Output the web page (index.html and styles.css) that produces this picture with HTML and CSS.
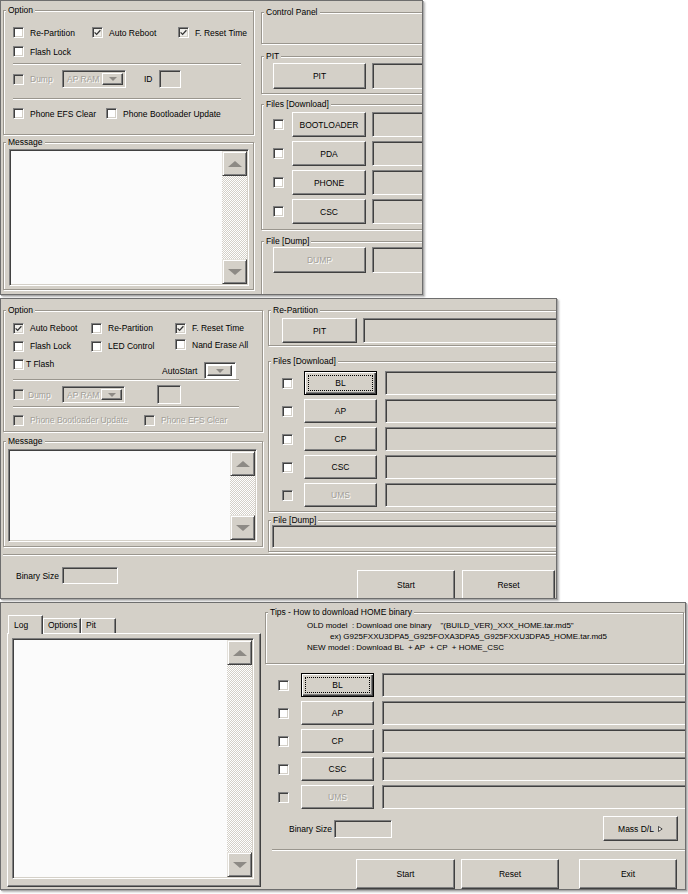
FILE: index.html
```html
<!DOCTYPE html>
<html lang="en">
<head>
<meta charset="utf-8">
<title>Odin</title>
<link rel="stylesheet" href="styles.css">
</head>
<body>
<div class="stack">

<!-- ===== Window 1 ===== -->
<section class="win w1">
  <div class="col lc1">
    <fieldset class="grp opt1">
      <legend>Option</legend>
      <div class="opt1-in">
        <div class="row h19">
          <label class="ck c79"><span class="cb"></span>Re-Partition</label>
          <label class="ck c86"><span class="cb on"><svg class="tick" viewBox="0 0 7 7"><path d="M0.6 3.4 L2.6 5.4 L6.4 1.2"/></svg></span>Auto Reboot</label>
          <label class="ck"><span class="cb on"><svg class="tick" viewBox="0 0 7 7"><path d="M0.6 3.4 L2.6 5.4 L6.4 1.2"/></svg></span>F. Reset Time</label>
        </div>
        <div class="row h19">
          <label class="ck"><span class="cb"></span>Flash Lock</label>
        </div>
        <div class="hr hr228 mt2"></div>
        <div class="row h18 mt5">
          <label class="ck dis c49"><span class="cb"></span>Dump</label>
          <div class="combo cmb1 dis"><span class="ctx">AP RAM</span><span class="dd"><i class="sdn"></i></span></div>
          <span class="idl">ID</span>
          <span class="tb idbox"></span>
        </div>
        <div class="hr hr228 mt10"></div>
        <div class="row h19 mt4">
          <label class="ck c93"><span class="cb"></span>Phone EFS Clear</label>
          <label class="ck"><span class="cb"></span>Phone Bootloader Update</label>
        </div>
      </div>
    </fieldset>
    <fieldset class="grp msg1">
      <legend>Message</legend>
      <div class="msg1-in">
        <div class="memo m1">
          <div class="sb"><span class="ar"><i class="aup"></i></span><span class="trk"></span><span class="ar"><i class="adn"></i></span></div>
        </div>
      </div>
    </fieldset>
  </div>

  <div class="col rc1">
    <fieldset class="grp cp1"><legend>Control Panel</legend></fieldset>
    <fieldset class="grp pit1"><legend>PIT</legend>
      <div class="row pit1-in"><span class="btn">PIT</span><span class="tb"></span></div>
    </fieldset>
    <fieldset class="grp files1"><legend>Files [Download]</legend>
      <div class="files1-in">
        <div class="row frow"><span class="cb"></span><span class="btn">BOOTLOADER</span><span class="tb"></span></div>
        <div class="row frow"><span class="cb"></span><span class="btn">PDA</span><span class="tb"></span></div>
        <div class="row frow"><span class="cb"></span><span class="btn">PHONE</span><span class="tb"></span></div>
        <div class="row frow"><span class="cb"></span><span class="btn">CSC</span><span class="tb"></span></div>
      </div>
    </fieldset>
    <fieldset class="grp dump1"><legend>File [Dump]</legend>
      <div class="row dump1-in"><span class="btn dis">DUMP</span><span class="tb"></span></div>
    </fieldset>
  </div>
</section>

<!-- ===== Window 2 ===== -->
<section class="win w2">
  <div class="w2main">
    <div class="col lc2">
      <fieldset class="grp opt2">
        <legend>Option</legend>
        <div class="opt2-in">
          <div class="row h18">
            <label class="ck c78"><span class="cb on"><svg class="tick" viewBox="0 0 7 7"><path d="M0.6 3.4 L2.6 5.4 L6.4 1.2"/></svg></span>Auto Reboot</label>
            <label class="ck c84"><span class="cb"></span>Re-Partition</label>
            <label class="ck"><span class="cb on"><svg class="tick" viewBox="0 0 7 7"><path d="M0.6 3.4 L2.6 5.4 L6.4 1.2"/></svg></span>F. Reset Time</label>
          </div>
          <div class="row h18">
            <label class="ck c78"><span class="cb"></span>Flash Lock</label>
            <label class="ck c84"><span class="cb"></span>LED Control</label>
            <label class="ck nand"><span class="cb"></span>Nand Erase All</label>
          </div>
          <div class="row r3">
            <label class="ck tflash"><span class="cb"></span>T Flash</label>
            <div class="row autost">
              <span class="asl">AutoStart</span>
              <div class="acombo"><span class="dd ddw"><i class="sdn"></i></span></div>
            </div>
          </div>
          <div class="hr hr226"></div>
          <div class="row h19 mt4">
            <label class="ck dis c49 dumpck"><span class="cb"></span>Dump</label>
            <div class="combo cmb2 dis"><span class="ctx">AP RAM</span><span class="dd"><i class="sdn"></i></span></div>
            <span class="tb box2"></span>
          </div>
          <div class="hr hr226 mt2"></div>
          <div class="row h18 mt3">
            <label class="ck dis c131"><span class="cb"></span>Phone Bootloader Update</label>
            <label class="ck dis"><span class="cb"></span>Phone EFS Clear</label>
          </div>
        </div>
      </fieldset>
      <fieldset class="grp msg2">
        <legend>Message</legend>
        <div class="msg2-in">
          <div class="memo m2">
            <div class="sb"><span class="ar"><i class="aup"></i></span><span class="trk"></span><span class="ar"><i class="adn"></i></span></div>
          </div>
        </div>
      </fieldset>
    </div>

    <div class="col rc2">
      <fieldset class="grp rp2"><legend>Re-Partition</legend>
        <div class="row rp2-in"><span class="btn">PIT</span><span class="tb"></span></div>
      </fieldset>
      <fieldset class="grp files2"><legend>Files [Download]</legend>
        <div class="files2-in">
          <div class="row frow"><span class="cb"></span><span class="btn focus"><span class="fr">BL</span></span><span class="tb"></span></div>
          <div class="row frow"><span class="cb"></span><span class="btn">AP</span><span class="tb"></span></div>
          <div class="row frow"><span class="cb"></span><span class="btn">CP</span><span class="tb"></span></div>
          <div class="row frow"><span class="cb"></span><span class="btn">CSC</span><span class="tb"></span></div>
          <div class="row frow"><span class="cb cbdis"></span><span class="btn dis">UMS</span><span class="tb"></span></div>
        </div>
      </fieldset>
      <fieldset class="grp dump2"><legend>File [Dump]</legend>
        <div class="dump2-in"><span class="tb"></span></div>
      </fieldset>
    </div>
  </div>
  <div class="hsep"></div>
  <div class="foot2">
    <div class="row bsz2"><span>Binary Size</span><span class="tb"></span></div>
    <span class="btn fb start2">Start</span>
    <span class="btn fb reset2">Reset</span>
  </div>
</section>

<!-- ===== Window 3 ===== -->
<section class="win w3">
  <div class="col lc3">
    <div class="tabs">
      <span class="tab sel t-log">Log</span>
      <span class="tab t-opt">Options</span>
      <span class="tab t-pit">Pit</span>
    </div>
    <div class="tpanel">
      <div class="memo m3">
        <div class="sb"><span class="ar"><i class="aup"></i></span><span class="trk"></span><span class="ar"><i class="adn"></i></span></div>
      </div>
    </div>
  </div>

  <div class="col rc3">
    <fieldset class="grp tips"><legend>Tips - How to download HOME binary</legend>
      <div class="tips-in">
        <div class="tl">OLD model  : Download one binary    "(BUILD_VER)_XXX_HOME.tar.md5"</div>
        <div class="tl ex">ex) G925FXXU3DPA5_G925FOXA3DPA5_G925FXXU3DPA5_HOME.tar.md5</div>
        <div class="tl">NEW model : Download BL  + AP  + CP  + HOME_CSC</div>
      </div>
    </fieldset>
    <div class="files3">
      <div class="row frow"><span class="cb"></span><span class="btn focus"><span class="fr">BL</span></span><span class="tb"></span></div>
      <div class="row frow"><span class="cb"></span><span class="btn">AP</span><span class="tb"></span></div>
      <div class="row frow"><span class="cb"></span><span class="btn">CP</span><span class="tb"></span></div>
      <div class="row frow"><span class="cb"></span><span class="btn">CSC</span><span class="tb"></span></div>
      <div class="row frow"><span class="cb cbdis"></span><span class="btn dis">UMS</span><span class="tb"></span></div>
    </div>
    <div class="row bsz3">
      <span class="bsl">Binary Size</span><span class="tb"></span>
      <span class="btn mass">Mass D/L <svg class="tri" viewBox="0 0 6 7"><path d="M0.5 0.5 L5 3.5 L0.5 6.5 Z"/></svg></span>
    </div>
    <div class="hr sep3"></div>
    <div class="row btns3">
      <span class="btn b-start">Start</span>
      <span class="btn b-reset">Reset</span>
      <span class="btn b-exit">Exit</span>
    </div>
  </div>
</section>

</div>
</body>
</html>
```

FILE: styles.css
```css
* { box-sizing: border-box; }
html, body { margin: 0; padding: 0; background: #fff; }
body {
  font-family: "Liberation Sans", Arial, sans-serif;
  font-size: 8.5px;
  line-height: 10px;
  color: #000;
  width: 688px;
  height: 894px;
  overflow: hidden;
}
.stack { display: flex; flex-direction: column; align-items: flex-start; }

.win {
  background: #d4d0c8;
  border: 1px solid #6e6e6e;
  box-shadow: 1px 1px 0 #a9a9a9, 2px 2px 2px rgba(0,0,0,.3);
  overflow: hidden;
  flex-shrink: 0;
}
.w1 { width: 423px; height: 295px; display: flex; align-items: flex-start; padding: 4px 0 0 2px; }
.w2 { width: 557px; height: 301px; margin-top: 3px; display: flex; flex-direction: column; }
.w3 { width: 686px; height: 288px; margin-top: 3px; display: flex; align-items: flex-start; }

.col { display: flex; flex-direction: column; flex-shrink: 0; }
.row { display: flex; align-items: center; flex-shrink: 0; }

/* group boxes */
.grp {
  margin: 0; padding: 0;
  border: 1px solid #9a968e;
  box-shadow: inset 1px 1px 0 #fff, 1px 1px 0 #fff;
  min-width: 0;
  flex-shrink: 0;
}
.grp > legend {
  margin-left: 2px;
  padding: 0 2px;
  height: 10px;
  line-height: 10px;
  background: #d4d0c8;
  white-space: nowrap;
}

/* checkbox */
.ck { display: flex; align-items: center; white-space: nowrap; flex-shrink: 0; }
.cb {
  width: 11px; height: 11px; flex-shrink: 0;
  background: #fff;
  border: 1px solid; border-color: #808080 #fff #fff #808080;
  box-shadow: inset 1px 1px 0 #404040, inset -1px -1px 0 #d4d0c8;
  display: flex; align-items: center; justify-content: center;
  margin-right: 6px;
}
.cb.on { background: #efeeea; }
.tick { width: 7px; height: 7px; fill: none; stroke: #333; stroke-width: 1.3; }
.dis { color: #a29f98; text-shadow: 1px 1px 0 #fff; }
.dis .cb, .cb.cbdis { background: #d4d0c8; }

/* buttons */
.btn {
  display: flex; align-items: center; justify-content: center; flex-shrink: 0;
  background: #d4d0c8;
  border: 1px solid; border-color: #fff #404040 #404040 #fff;
  box-shadow: inset -1px -1px 0 #808080;
  white-space: nowrap;
}
.btn.focus {
  border-color: #000;
  box-shadow: inset 1px 1px 0 #fff, inset -1px -1px 0 #404040, inset -2px -2px 0 #808080;
  padding: 3px;
}
.fr {
  flex: 1; align-self: stretch;
  display: flex; align-items: center; justify-content: center;
  border: 1px dotted #000;
}

/* text boxes */
.tb {
  flex-shrink: 0;
  background: #d4d0c8;
  border: 1px solid; border-color: #808080 #fff #fff #808080;
  box-shadow: inset 1px 1px 0 #404040;
}

/* memo + scrollbar */
.memo {
  flex-shrink: 0;
  display: flex; justify-content: flex-end;
  background: #fbfbfb;
  border: 1px solid; border-color: #808080 #fff #fff #808080;
  box-shadow: inset 1px 1px 0 #404040, inset -1px -1px 0 #d4d0c8;
  padding: 1px;
}
.sb { width: 25px; display: flex; flex-direction: column; }
.ar {
  height: 25px; flex-shrink: 0;
  display: flex; align-items: center; justify-content: center;
  background: #d4d0c8;
  border: 1px solid; border-color: #e4e1db #404040 #404040 #e4e1db;
  box-shadow: inset 1px 1px 0 #fff, inset -1px -1px 0 #808080;
}
.trk { flex: 1; background: repeating-conic-gradient(#d4d0c8 0 25%, #fff 0 50%) 0 0 / 2px 2px; }
.aup { width: 0; height: 0; border-left: 7px solid transparent; border-right: 7px solid transparent; border-bottom: 6px solid #8d8a85; }
.adn { width: 0; height: 0; border-left: 7px solid transparent; border-right: 7px solid transparent; border-top: 6px solid #8d8a85; }

/* combo */
.combo {
  display: flex; align-items: center; justify-content: space-between; flex-shrink: 0;
  border: 1px solid; border-color: #808080 #fff #fff #808080;
  box-shadow: inset 1px 1px 0 #404040;
  padding: 2px;
  background: #d4d0c8;
}
.ctx { padding-left: 2px; }
.dd {
  align-self: stretch; width: 21px;
  display: flex; align-items: center; justify-content: center;
  border: 1px solid; border-color: #fff #404040 #404040 #fff;
  box-shadow: inset -1px -1px 0 #808080;
}
.sdn { width: 0; height: 0; border-left: 4px solid transparent; border-right: 4px solid transparent; border-top: 4px solid #8d8a85; }

.hr { height: 2px; border-top: 1px solid #9a968e; border-bottom: 1px solid #fff; flex-shrink: 0; }

/* helpers */
.h18 { height: 18px; } .h19 { height: 19px; }
.mt2 { margin-top: 2px; } .mt3 { margin-top: 3px; } .mt4 { margin-top: 4px; }
.mt5 { margin-top: 5px; } .mt10 { margin-top: 10px; }
.c49 { width: 49px; } .c78 { width: 78px; } .c79 { width: 79px; } .c84 { width: 84px; }
.c86 { width: 86px; } .c93 { width: 93px; } .c131 { width: 131px; }
.hr228 { width: 228px; } .hr226 { width: 226px; }

/* ---- window 1 ---- */
.lc1 { width: 251px; }
.opt1 { height: 130px; }
.opt1-in { padding: 8px 0 0 9px; }
.cmb1 { width: 64px; height: 18px; }
.idl { margin-left: 18px; }
.idbox { width: 22px; height: 18px; margin-left: 6px; }
.msg1 { height: 153px; margin-top: 2px; }
.msg1-in { padding: 2px 0 0 5px; }
.m1 { width: 240px; height: 137px; }

.rc1 { width: 180px; margin-left: 7px; padding-top: 2px; }
.cp1 { height: 37px; }
.pit1 { height: 43px; margin-top: 7px; }
.pit1-in { padding: 2px 0 0 11px; }
.pit1-in .btn { width: 93px; height: 26px; }
.pit1-in .tb { width: 70px; height: 26px; margin-left: 6px; }
.files1 { height: 131px; margin-top: 5px; }
.files1-in { padding: 3px 0 0 11px; display: flex; flex-direction: column; gap: 4px; }
.files1 .frow { height: 25px; }
.files1 .cb { margin-right: 8px; }
.files1 .btn { width: 74px; height: 25px; }
.files1 .tb { width: 70px; height: 25px; margin-left: 6px; }
.dump1 { height: 60px; margin-top: 6px; }
.dump1-in { padding: 1px 0 0 11px; }
.dump1-in .btn { width: 93px; height: 26px; }
.dump1-in .tb { width: 70px; height: 26px; margin-left: 6px; }

/* ---- window 2 ---- */
.w2main { display: flex; align-items: flex-start; padding: 6px 0 0 2px; flex-shrink: 0; }
.lc2 { width: 260px; }
.opt2 { height: 127px; }
.opt2-in { padding: 4px 0 0 9px; }
.nand { margin-top: -3px; }
.r3 { align-items: flex-start; height: 24px; }
.tflash { width: 149px; height: 18px; }
.tflash .cb { margin-right: 2px; }
.autost { margin-top: 7px; height: 17px; }
.asl { width: 42px; }
.acombo {
  width: 32px; height: 17px; display: flex; padding: 2px 3px 2px 2px;
  background: #fff;
  border: 1px solid; border-color: #808080 #fff #fff #808080;
  box-shadow: inset 1px 1px 0 #404040;
}
.ddw { width: auto; flex: 1; background: #d4d0c8; }
.dumpck .cb { margin-right: 4px; }
.cmb2 { width: 63px; height: 17px; }
.box2 { width: 24px; height: 19px; margin-left: 32px; }
.msg2 { height: 111px; margin-top: 4px; }
.msg2-in { padding: 3px 0 0 4px; }
.m2 { width: 249px; height: 93px; }

.rc2 { width: 300px; margin-left: 5px; }
.rp2 { height: 41px; }
.rp2-in { padding: 3px 0 0 13px; }
.rp2-in .btn { width: 75px; height: 25px; }
.rp2-in .tb { width: 220px; height: 25px; margin-left: 6px; }
.files2 { height: 156px; margin-top: 10px; }
.files2-in { padding: 5px 0 0 13px; display: flex; flex-direction: column; gap: 4px; }
.files2 .frow { height: 24px; }
.files2 .cb { margin-right: 11px; }
.files2 .btn { width: 73px; height: 24px; }
.files2 .tb { width: 200px; height: 24px; margin-left: 8px; }
.dump2 { height: 37px; margin-top: 3px; }
.dump2-in { padding: 0 0 0 3px; }
.dump2-in .tb { width: 292px; height: 23px; display: block; }

.hsep { height: 2px; border-top: 1px solid #9a968e; border-bottom: 1px solid #fff; margin: 2px 0 0 2px; flex-shrink: 0; }
.foot2 { display: flex; align-items: flex-start; padding: 0 1px 0 15px; flex-shrink: 0; }
.bsz2 { margin-top: 11px; height: 17px; }
.bsz2 .tb { width: 56px; height: 17px; margin-left: 3px; }
.fb { height: 30px; margin-top: 14px; }
.start2 { width: 98px; margin-left: auto; }
.reset2 { width: 93px; margin-left: 7px; }

/* ---- window 3 ---- */
.lc3 { margin: 12px 0 0 6px; width: 254px; }
.tabs { display: flex; align-items: flex-end; height: 18px; padding-left: 1px; position: relative; z-index: 1; }
.tab {
  height: 15px; line-height: 13px;
  border: 1px solid; border-bottom: 0; border-color: #fff #404040 #fff #fff;
  box-shadow: inset -1px 0 0 #808080;
  padding: 0 0 0 4px;
  background: #d4d0c8;
}
.tab.sel { height: 19px; margin-bottom: -1px; padding-top: 3px; padding-left: 5px; }
.t-log { width: 35px; }
.t-opt { width: 38px; }
.t-pit { width: 35px; }
.tpanel {
  width: 254px; height: 254px;
  border: 1px solid; border-color: #fff #404040 #404040 #fff;
  box-shadow: inset -1px -1px 0 #808080;
  padding: 4px 0 0 4px;
}
.m3 { width: 242px; height: 241px; }

.rc3 { width: 421px; margin: 4px 0 0 4px; }
.tips { width: 419px; height: 57px; }
.tips-in { padding: 3px 0 0 41px; }
.tl { white-space: pre; line-height: 11px; font-size: 8px; }
.tl.ex { padding-left: 23px; }
.files3 { margin-top: 9px; padding-left: 13px; display: flex; flex-direction: column; gap: 4px; }
.files3 .frow { height: 24px; }
.files3 .cb { margin-right: 12px; }
.files3 .btn { width: 73px; height: 24px; }
.files3 .tb { width: 320px; height: 24px; margin-left: 8px; }
.bsz3 { margin-top: 7px; height: 25px; }
.bsl { margin-left: 24px; }
.bsz3 .tb { width: 58px; height: 18px; margin-left: 2px; }
.mass { width: 75px; height: 25px; margin-left: auto; margin-right: 8px; gap: 4px; }
.tri { width: 5px; height: 6px; fill: #fff; stroke: #222; stroke-width: 1; }
.sep3 { margin: 8px 0 0 7px; width: 420px; }
.btns3 { margin-top: 8px; height: 30px; padding-left: 91px; }
.btns3 .btn { height: 30px; }
.b-start { width: 99px; }
.b-reset { width: 98px; margin-left: 6px; }
.b-exit { width: 98px; margin-left: 20px; }
```
